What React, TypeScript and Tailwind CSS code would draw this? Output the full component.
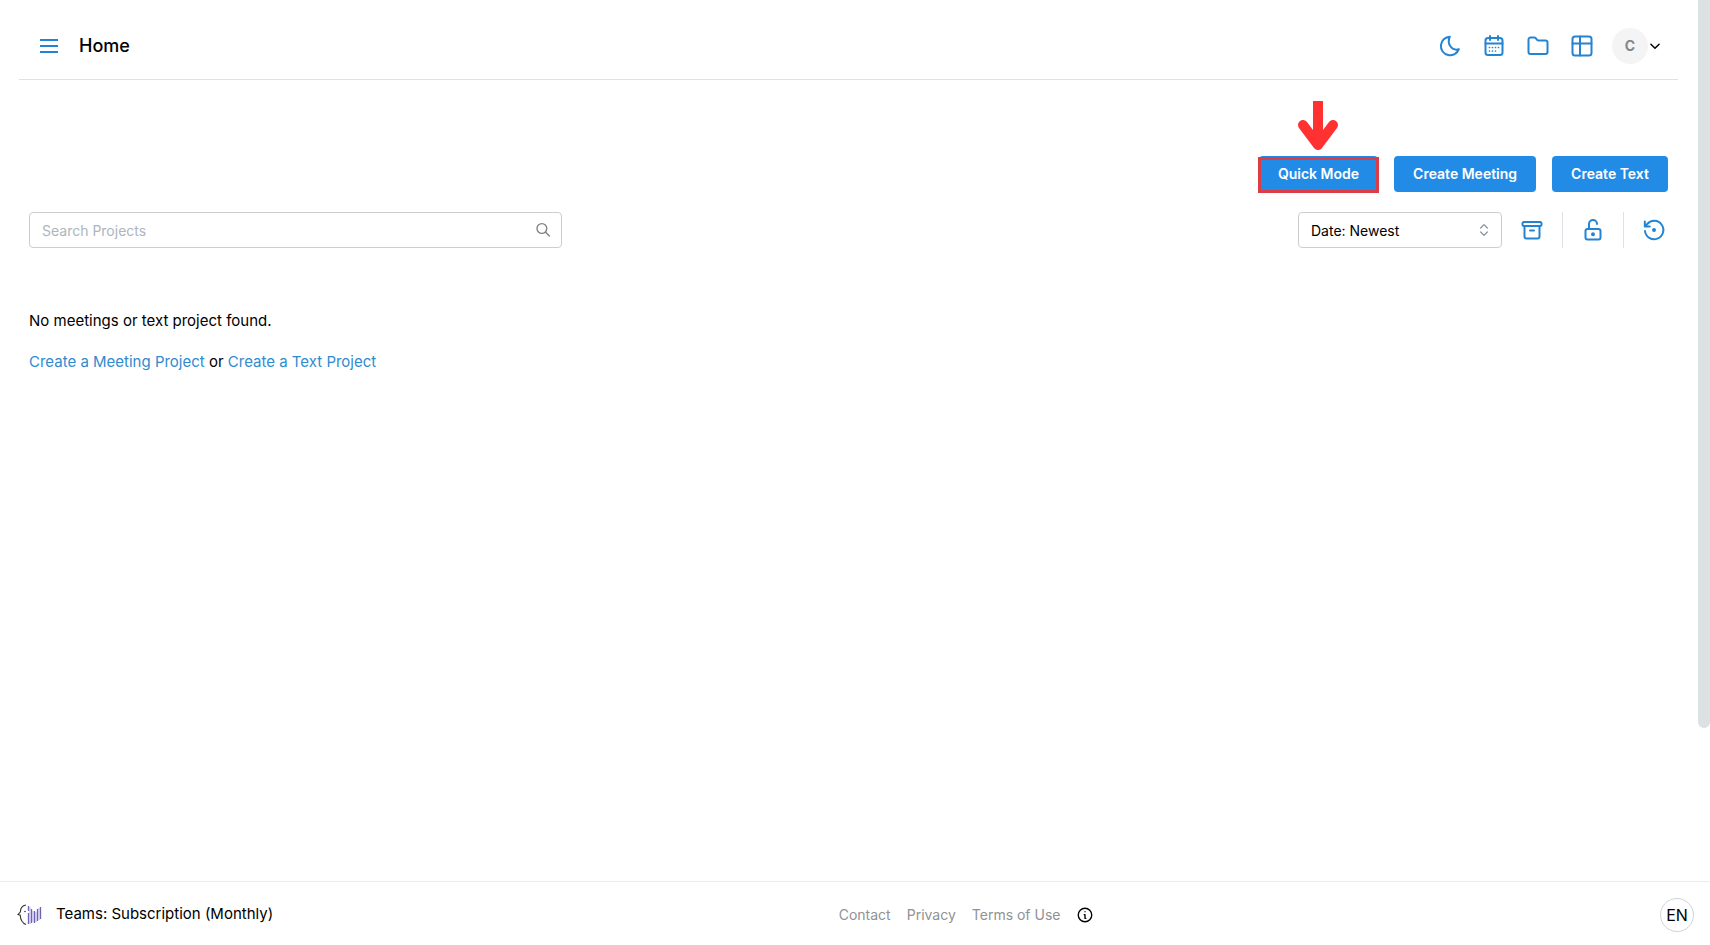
import type { ReactNode } from "react";

function Icon({ size = 24, width = 2, children }: { size?: number; width?: number; children: ReactNode }) {
  return (
    <svg
      width={size}
      height={size}
      viewBox="0 0 24 24"
      fill="none"
      stroke="currentColor"
      strokeWidth={width}
      strokeLinecap="round"
      strokeLinejoin="round"
      className="shrink-0"
      aria-hidden="true"
    >
      {children}
    </svg>
  );
}

const headerIcons = [
  {
    label: "Dark mode",
    drawing: <path d="M11.8 2.7A9.3 9.3 0 1 0 20.9 15.2C14 17.4 8.500 10 11.8 2.7z" />,
  },
  {
    label: "Calendar",
    drawing: (
      <>
        <rect x="3.5" y="4" width="17" height="17" rx="2.5" />
        <path d="M8 2v4M16 2v4M3.5 9.5h17" />
        <path
          d="M7.5 13.5h.01M10.5 13.5h.01M13.5 13.5h.01M16.5 13.5h.01M7.5 17h.01M10.5 17h.01M13.5 17h.01"
          strokeWidth="1.7"
        />
      </>
    ),
  },
  {
    label: "Folders",
    drawing: (
      <path d="M4.5 3.5h3.7a2 2 0 0 1 1.5.7l1.4 1.6a2 2 0 0 0 1.5.7h6.9a2 2 0 0 1 2 2v9.5a2 2 0 0 1-2 2h-15a2 2 0 0 1-2-2V5.5a2 2 0 0 1 2-2z" />
    ),
  },
  {
    label: "Boards",
    drawing: (
      <>
        <rect x="2.5" y="2.5" width="19" height="19" rx="2.5" />
        <path d="M2.5 9.5h19M10 2.5v19" />
      </>
    ),
  },
];

const footerLinks = ["Contact", "Privacy", "Terms of Use"];

function Header() {
  return (
    <header className="flex h-20 items-center justify-between border-b border-[#dee2e6] pt-3 pr-4 pl-[18px]">
      <div className="flex items-center gap-[18px]">
        <button aria-label="Menu" className="flex text-[#2484d4]">
          <svg width="24" height="24" viewBox="0 0 24 24" stroke="currentColor" strokeWidth="2" aria-hidden="true">
            <path d="M3 6h18M3 12h18M3 18h18" />
          </svg>
        </button>
        <h1 className="text-lg font-medium">Home</h1>
      </div>
      <div className="flex items-center gap-[18px]">
        <div className="flex items-center gap-5 text-[#2484d4]">
          {headerIcons.map((icon) => (
            <button key={icon.label} aria-label={icon.label} className="flex">
              <Icon>{icon.drawing}</Icon>
            </button>
          ))}
        </div>
        <button aria-label="Account" className="flex items-center">
          <span className="flex size-9 items-center justify-center rounded-full bg-[#f4f4f4] text-sm font-bold text-[#868686]">
            C
          </span>
          <Icon size={14} width={2.5}>
            <path d="M5 9l7 7 7-7" />
          </Icon>
        </button>
      </div>
    </header>
  );
}

function ActionButton({ children }: { children: ReactNode }) {
  return <button className="h-9 rounded bg-[#228be6] px-[19px] text-sm font-semibold text-white">{children}</button>;
}

function Actions() {
  return (
    <div className="flex justify-end gap-4">
      <div className="relative">
        <ActionButton>Quick Mode</ActionButton>
        <div className="pointer-events-none absolute -inset-x-px top-px -bottom-px border-3 border-[#dc3c46]" />
        <svg
          width="42"
          height="50"
          viewBox="0 0 42 50"
          className="absolute bottom-full left-1/2 mb-[5px] -translate-x-1/2"
          fill="none"
          stroke="#ff3131"
          strokeWidth="10"
          aria-hidden="true"
        >
          <path d="M21 0v40" />
          <path d="M6 24l15 20 15-20" strokeLinecap="round" strokeLinejoin="round" />
        </svg>
      </div>
      <ActionButton>Create Meeting</ActionButton>
      <ActionButton>Create Text</ActionButton>
    </div>
  );
}

function Toolbar() {
  return (
    <div className="mt-5 flex items-center justify-between">
      <div className="relative w-[533px]">
        <input
          type="text"
          aria-label="Search Projects"
          placeholder="Search Projects"
          className="h-9 w-full rounded border border-[#cbced1] pr-9 pl-3 text-sm placeholder:text-[#adb5bd]"
        />
        <span className="pointer-events-none absolute inset-y-0 right-2.5 flex items-center text-[#808080]">
          <Icon size={18} width={1.8}>
            <circle cx="10.5" cy="10" r="6.5" />
            <path d="M15.5 15l5 5" />
          </Icon>
        </span>
      </div>
      <div className="flex items-center gap-[18px] pr-0.5 text-[#2484d4]">
        <div className="relative w-[204px]">
          <select
            aria-label="Sort by"
            className="h-9 w-full appearance-none rounded border border-[#cbced1] bg-white px-3 pt-0.5 text-sm text-black"
          >
            <option>Date: Newest</option>
          </select>
          <span className="pointer-events-none absolute inset-y-0 right-2.5 flex items-center text-[#868e96]">
            <Icon size={16} width={1.8}>
              <path d="M7 9l5-5 5 5M17 15l-5 5-5-5" />
            </Icon>
          </span>
        </div>
        <button aria-label="Archive" className="flex">
          <Icon>
            <rect x="2.5" y="4" width="19" height="4" rx="1.5" />
            <path d="M4.5 8v10.5a2 2 0 0 0 2 2h11a2 2 0 0 0 2-2V8M10 12.5h4" />
          </Icon>
        </button>
        <div className="h-9 w-px bg-[#dee2e6]" />
        <button aria-label="Unlock" className="flex">
          <Icon>
            <rect x="4.5" y="11" width="15" height="10.5" rx="2" />
            <path d="M8 11V6a4 4 0 0 1 8 0" />
            <circle cx="12" cy="16.3" r="1" fill="currentColor" />
          </Icon>
        </button>
        <div className="h-9 w-px bg-[#dee2e6]" />
        <button aria-label="History" className="flex">
          <Icon>
            <path d="M3 13a9.2 9.2 0 1 0 2.2-7L2.8 8.5M2.8 3.5v5h5" />
            <circle cx="12" cy="12" r="1" fill="currentColor" />
          </Icon>
        </button>
      </div>
    </div>
  );
}

function Logo() {
  return (
    <svg width="25" height="22" viewBox="0 0 25 22" fill="none" aria-hidden="true">
      <path d="M9 1C5.5 1.5 3.5 4 3.3 8L1 10.5l2.2.7C3.5 16 5.5 19 9 20.5" stroke="#333" strokeWidth="1.1" />
      <circle cx="8" cy="7.5" r="0.8" fill="#333" />
      <path d="M11.5 2v5M11.5 9v11M14.5 5v14M17.5 7v12M20.5 5v12M23.5 3v12" stroke="#6d63b5" strokeWidth="1.3" />
      <path d="M13 3v17M16 7v11M19 8v10M22 4v12" stroke="#b3acdf" strokeWidth="1" />
    </svg>
  );
}

function Footer() {
  return (
    <footer className="flex h-16 items-center justify-between border-t border-[#e9ecef] pt-0.5 pr-4 pl-[17px]">
      <div className="flex items-center gap-3.5 text-[15px]">
        <Logo />
        <span>Teams: Subscription (Monthly)</span>
      </div>
      <nav className="flex items-center gap-4 text-sm text-[#909296]">
        {footerLinks.map((link) => (
          <a key={link} href="#">
            {link}
          </a>
        ))}
        <button aria-label="About" className="flex text-black">
          <Icon size={18} width={1.8}>
            <circle cx="12" cy="12" r="9" />
            <path d="M12 7.5h.01M11 11.5h1v5h1" />
          </Icon>
        </button>
      </nav>
      <button className="size-[34px] rounded-full border border-[#ced4da] text-base">EN</button>
    </footer>
  );
}

export default function App() {
  return (
    <div className="relative flex min-h-screen flex-col bg-white font-['Inter',sans-serif] text-black">
      <div className="flex-1 pr-8 pl-[19px]">
        <Header />
        <main className="px-2.5 pt-[76px] text-[15px] leading-6">
          <Actions />
          <Toolbar />
          <p className="mt-[61px]">No meetings or text project found.</p>
          <p className="mt-[17px]">
            <a href="#" className="text-[#2f8bd0]">
              Create a Meeting Project
            </a>{" "}
            or{" "}
            <a href="#" className="text-[#2f8bd0]">
              Create a Text Project
            </a>
          </p>
        </main>
      </div>
      <Footer />
      <div className="absolute top-0 right-0 h-[77%] w-3 rounded-b-md bg-[#dce2e3]" />
    </div>
  );
}
